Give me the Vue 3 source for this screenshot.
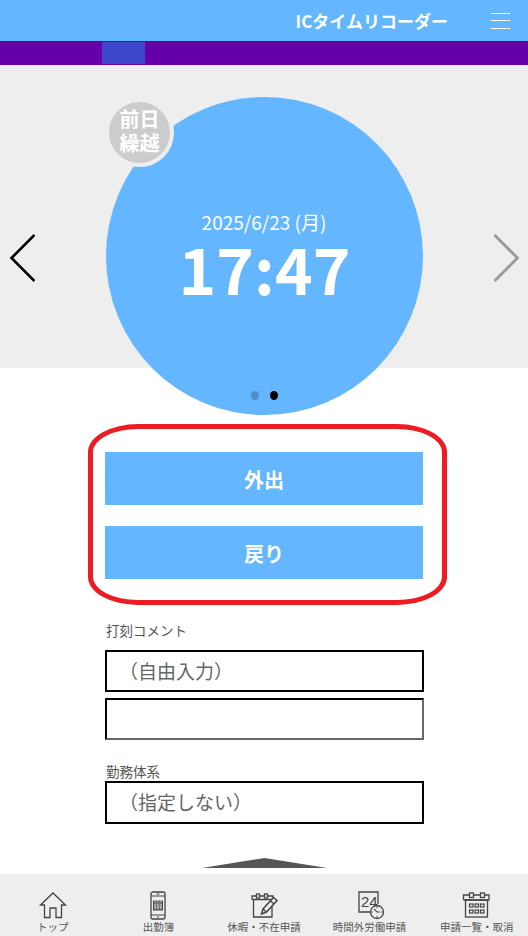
<script setup>
const navItems = [
  { label: 'トップ', icon: 'home' },
  { label: '出勤簿', icon: 'phone' },
  { label: '休暇・不在申請', icon: 'memo' },
  { label: '時間外労働申請', icon: 'clock' },
  { label: '申請一覧・取消', icon: 'cal' },
]
</script>

<template>
  <div class="page">
    <header class="top">
      <span class="title">ICタイムリコーダー</span>
      <span class="burger"><i></i><i></i><i></i></span>
    </header>
    <div class="tabs"><span class="tab"></span></div>
    <section class="hero">
      <svg class="chev" width="28" height="50" viewBox="0 0 28 50"><path d="M27.5 2 L4.5 25 L27.5 48" fill="none" stroke="#000" stroke-width="2.6"/></svg>
      <div class="clock">
        <div class="badge"><span class="badge-text">前日<br>繰越</span></div>
        <div class="date">2025/6/23 (月)</div>
        <div class="time">17:47</div>
        <div class="dots"><i class="dot"></i><i class="dot on"></i></div>
      </div>
      <svg class="chev" width="28" height="50" viewBox="0 0 28 50"><path d="M1.5 2 L24.5 25 L1.5 48" fill="none" stroke="#999" stroke-width="2.8"/></svg>
    </section>
    <main class="body">
      <div class="actions">
        <button class="act">外出</button>
        <button class="act">戻り</button>
      </div>
      <label class="lbl l1">打刻コメント</label>
      <div class="field">（自由入力）</div>
      <div class="field second"></div>
      <label class="lbl l2">勤務体系</label>
      <div class="field sel">（指定しない）</div>
      <div class="tri"></div>
    </main>
    <nav class="nav">
      <div v-for="n in navItems" :key="n.label" class="item">
        <svg class="ico" width="30" height="30" viewBox="0 0 30 30" fill="none" stroke="#444" stroke-width="1.3">
          <g v-if="n.icon === 'home'">
            <path d="M2.5 15 L15 3 L27.5 15 L23.5 15 L23.5 27.5 L18 27.5 L18 18 L12 18 L12 27.5 L6.5 27.5 L6.5 15 Z"/>
          </g>
          <g v-else-if="n.icon === 'phone'">
            <rect x="8" y="2" width="14" height="27" rx="2"/>
            <path d="M8 6 H22 M8 25 H22 M13.5 4 H16.5 M14 27 H16" stroke-width="1"/>
            <rect x="10.5" y="11" width="9" height="9" fill="#777" stroke="#444" stroke-width="1"/>
            <path d="M12 9 V12 M15 9 V12 M18 9 V12 M12 14 V19 M15 14 V19 M18 14 V19" stroke="#eee" stroke-width=".8"/>
          </g>
          <g v-else-if="n.icon === 'memo'">
            <path d="M23 15 V27 H4.5 V9 M3 9.5 V6 H7.5 M10.5 6 H15.5 M18.5 6 H24 V9.5 H3"/>
            <rect x="7.5" y="4" width="3" height="4" />
            <rect x="15.5" y="4" width="3" height="4" />
            <path d="M24.5 7.5 L14 19 L12.5 24 L17.5 22 L28 10.5 Z" fill="#eee" stroke-width="1.5"/>
            <path d="M14 19 L17.5 22 M21.5 11 L25 14"/>
          </g>
          <g v-else-if="n.icon === 'clock'">
            <path d="M15 22 H4 V2 H23 V14"/>
            <text x="6" y="17" class="ico-num">24</text>
            <circle cx="22" cy="22" r="6.5" fill="#eee"/>
            <path d="M19 19 L22 22 L25 22 M22 16.5 V18 M22 26 V27.5 M16.5 22 H18 M26 22 H27.5" stroke-width="1.1"/>
          </g>
          <g v-else>
            <rect x="3.5" y="10" width="22" height="17"/>
            <path d="M1.5 10 V5 H7.5 M11.5 5 H18.5 M22.5 5 H27 V10 H1.5" />
            <rect x="7.5" y="3" width="4" height="4.5"/>
            <rect x="18.5" y="3" width="4" height="4.5"/>
            <g stroke-width="1.2">
              <rect x="7.5" y="14" width="3.5" height="3"/><rect x="13" y="14" width="3.5" height="3"/><rect x="18.5" y="14" width="3.5" height="3"/>
              <rect x="7.5" y="20" width="3.5" height="3"/><rect x="13" y="20" width="3.5" height="3"/><rect x="18.5" y="20" width="3.5" height="3"/>
            </g>
          </g>
        </svg>
        <span class="nl">{{ n.label }}</span>
      </div>
    </nav>
  </div>
</template>

<style>
html, body { margin: 0; padding: 0; }
</style>
<style scoped>
.page {
  width: 528px; height: 936px; display: flex; flex-direction: column; overflow: hidden; background: #fff;
  font-family: "Noto Sans CJK JP", "Noto Sans", sans-serif; color: #555;
}
.top { height: 41px; background: #64b6fe; display: flex; align-items: center; justify-content: flex-end; padding-right: 18px; flex: none; }
.title { color: #fff; font-weight: 700; font-size: 17px; line-height: 41px; margin-right: 43px; }
.burger { width: 19px; display: flex; flex-direction: column; gap: 6.5px; }
.burger i { display: block; height: 1px; background: #fff; }
.tabs { height: 24px; background: #6600a8; flex: none; padding: 1px 0 1px 102px; box-sizing: border-box; }
.tab { display: block; width: 43px; height: 22px; background: #3f48cc; }
.hero { height: 303px; flex: none; background: #eee; display: flex; justify-content: space-between; align-items: flex-start; padding: 32px 7px 0; box-sizing: border-box; }
.chev { margin-top: 136px; }
.clock { width: 317px; height: 318px; border-radius: 50%; background: #64b6fe; position: relative; color: #fff; text-align: center; flex: none; margin-left: 1px; }
.badge { position: absolute; left: -1px; top: 1px; width: 61px; height: 61px; border-radius: 50%; background: #ccc; border: 4px solid #eee; display: flex; align-items: center; justify-content: center; font-weight: 700; font-size: 20px; line-height: 24px; }
.badge-text { margin-top: -3px; }
.date { font-size: 19px; line-height: 26px; margin-top: 112px; padding-right: 1px; }
.time { font-size: 64px; font-weight: 700; line-height: 70px; margin-top: -3px; }
.dots { position: absolute; left: 145px; top: 294px; display: flex; gap: 11px; }
.dot { width: 8px; height: 9px; border-radius: 50%; background: #4d8fc6; }
.dot.on { background: #000; }
.body { flex: 1; position: relative; padding: 84px 0 0 105px; box-sizing: border-box; overflow: hidden; min-height: 0; }
.actions { width: 318px; display: flex; flex-direction: column; gap: 21px; position: relative; }
.actions::before { content: ""; position: absolute; left: -17px; right: -24px; top: -28px; bottom: -26px; border: 5px solid #ed1c24; border-radius: 50px / 28px; }
.act { height: 53px; border: 0; padding: 1px 0 0; background: #64b6fe; color: #fff; font-family: inherit; font-weight: 700; font-size: 20px; display: block; width: 100%; }
.lbl { display: block; font-size: 13.5px; line-height: 18px; color: #555; padding-left: 1px; }
.l1 { margin-top: 42px; margin-bottom: 11px; }
.l2 { margin-top: 22px; margin-bottom: 1px; }
.field { width: 319px; height: 42px; box-sizing: border-box; border: 2px solid #000; font-size: 19px; line-height: 38px; color: #666; padding-left: 12px; }
.second { margin-top: 6px; border-right-color: #666; border-bottom-color: #666; }
.sel { height: 43px; margin-top: 0; }
.tri { position: absolute; left: 202px; bottom: 6px; width: 125px; height: 10px; background: #555; clip-path: polygon(50% 0, 100% 100%, 0 100%); }
.nav { height: 62px; flex: none; background: #eee; display: flex; }
.item { width: 105.6px; box-sizing: border-box; display: flex; flex-direction: column; align-items: center; }
.item:last-child { padding-left: 3px; }
.ico { margin-top: 16px; flex: none; }
.ico-num { font-family: "Liberation Sans", sans-serif; font-size: 15px; fill: #444; stroke: none; }
.nl { font-size: 10.5px; line-height: 14px; color: #555; white-space: nowrap; }
</style>
